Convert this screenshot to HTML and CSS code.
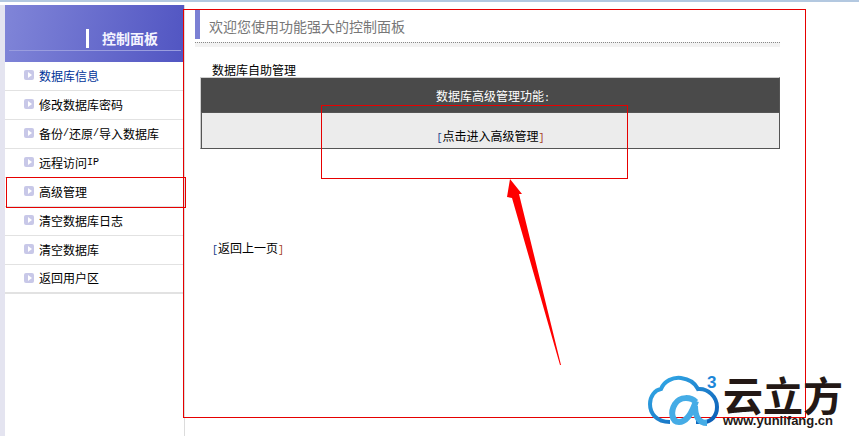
FILE: index.html
```html
<!DOCTYPE html>
<html lang="zh-CN">
<head>
    <meta charset="UTF-8">
    <title>控制面板</title>
    <link rel="stylesheet" href="styles.css">
</head>
<body>
    <div class="top_line"></div>
    <div class="page">
        <div class="side">
            <div class="side_head">
                <div class="side_title"><span>控制面板</span></div>
            </div>
            <p class="side_item active"><i class="dot"></i>数据库信息</p>
            <p class="side_item"><i class="dot"></i>修改数据库密码</p>
            <p class="side_item"><i class="dot"></i>备份<span class="mono">/</span>还原<span class="mono">/</span>导入数据库</p>
            <p class="side_item"><i class="dot"></i>远程访问<span class="mono">IP</span></p>
            <p class="side_item"><i class="dot"></i>高级管理</p>
            <p class="side_item"><i class="dot"></i>清空数据库日志</p>
            <p class="side_item"><i class="dot"></i>清空数据库</p>
            <p class="side_item last"><i class="dot"></i>返回用户区</p>
        </div>
        <div class="main">
            <h1 class="welcome">欢迎您使用功能强大的控制面板</h1>
            <div class="dots"></div>
            <p class="caption">数据库自助管理</p>
            <div class="panel">
                <div class="panel_head">数据库高级管理功能<span class="mono">:</span></div>
                <div class="panel_row"><span class="mono left">[</span>点击进入高级管理<span class="mono right">]</span></div>
            </div>
            <p class="back"><span class="mono left">[</span>返回上一页<span class="mono right">]</span></p>
        </div>
    </div>

    <!-- annotations drawn over the screenshot -->
    <div class="mark mark_big"></div>
    <div class="mark mark_item"></div>
    <div class="mark mark_link"></div>
    <svg class="arrow" width="70" height="190" viewBox="0 0 70 190">
        <path d="M10 0 L22 15 L19 15 L61 186 L60 186 L12 19 L7 18 Z" fill="#ff0000"/>
    </svg>

    <div class="logo">
        <svg class="cloud" width="78" height="54" viewBox="0 0 78 54">
            <defs>
                <linearGradient id="cloudFill" x1="0" y1="0" x2="1" y2="1">
                    <stop offset="0" stop-color="#35aeea"/>
                    <stop offset="1" stop-color="#0b5cb5"/>
                </linearGradient>
            </defs>
            <path d="M22 49 C8 49 2 40 2 31 C2 23 7 17 13 16 C16 8 25 4 33 5 C41 6 47 10 50 16 C60 15 69 24 69 34 C69 43 63 49 56 49 L48 49"
                fill="none" stroke="url(#cloudFill)" stroke-width="4"/>
            <path d="M48 29 C43 24 32 23 27 31 C22 39 24 49 31 49 C39 49 44 40 48 28 M47 33 C47 43 51 50 59 50"
                fill="none" stroke="#45ace6" stroke-width="6"/>
        </svg>
        <span class="cube">3</span>
        <div class="logo_text">
            <div class="logo_name">云立方</div>
            <div class="logo_url">www.yunlifang.cn</div>
        </div>
    </div>
</body>
</html>
```

FILE: styles.css
```css
html, body {
    margin: 0;
    height: 436px;
    overflow: hidden;
    background: #fff;
    font-family: "Noto Sans CJK SC", "Liberation Sans", sans-serif;
    font-size: 12px;
    color: #000;
}
body {
    position: relative;
}
.top_line {
    height: 2px;
    margin-bottom: 2px;
    background: #b3c8e0;
}
.page {
    display: flex;
    height: 432px;
    border-top: 1px solid transparent;
    box-sizing: border-box;
}
.side {
    width: 180px;
    margin-left: 5px;
    box-sizing: border-box;
    border-right: 1px solid #dcdcdc;
    box-shadow: -5px 0 0 #e4e4f0;
}
.side_head {
    height: 57px;
    padding: 0 3px 0 4px;
    box-sizing: border-box;
    background: linear-gradient(100deg, #8085d8, #5155c2);
}
.side_title {
    height: 46px;
    padding: 0 0 2px 77px;
    box-sizing: border-box;
    display: flex;
    align-items: flex-end;
    border-bottom: 1px solid #9a9dde;
}
.side_title span {
    border-left: 3px solid #fff;
    padding-left: 13px;
    height: 19px;
    line-height: 19px;
    color: #f4f4ff;
    font-size: 14px;
    font-weight: 700;
}
.side_item {
    display: flex;
    align-items: center;
    height: 29px;
    margin: 0;
    padding: 0 0 2px 19px;
    box-sizing: border-box;
    border-bottom: 1px solid #e2e2e2;
}
.side_item.active {
    color: #003399;
}
.side_item.last {
    border-bottom-width: 2px;
}
.mono {
    font-family: "Liberation Mono", monospace;
    font-size: 10px;
}
.left {
    color: #1c3f8a;
}
.right {
    color: #a5401c;
}
.dot {
    position: relative;
    width: 10px;
    height: 10px;
    margin-right: 5px;
    border-radius: 2px;
    background: #c8c8e8;
}
.dot::after {
    content: "";
    position: absolute;
    left: 4px;
    top: 2px;
    border-left: 4px solid #fff;
    border-top: 3px solid transparent;
    border-bottom: 3px solid transparent;
}
.main {
    width: 595px;
    padding: 5px 0 0 10px;
    box-sizing: border-box;
}
.welcome {
    margin: 0;
    height: 29px;
    padding-left: 9px;
    border-left: 5px solid #7b80d4;
    font-size: 14px;
    font-weight: 400;
    line-height: 32px;
    color: #777;
}
.dots {
    height: 4px;
    margin-top: 3px;
    border-top: 1px dotted #888;
    background: #f2f2f2;
}
.caption {
    margin: 15px 0 0 17px;
    height: 15px;
    line-height: 15px;
}
.panel {
    margin: 0 0 0 5px;
    width: 580px;
    border: 1px solid #cfcfcf;
    border-right: 1px solid #555;
    border-bottom: 1px solid #555;
    box-sizing: border-box;
}
.panel_head {
    height: 34px;
    padding-left: 6px;
    box-sizing: border-box;
    line-height: 35px;
    text-align: center;
    background: #4a4a4a;
    color: #fff;
}
.panel_row {
    height: 36px;
    padding-top: 13px;
    box-sizing: border-box;
    line-height: 20px;
    text-align: center;
    background: #ececec;
    border-top: 1px solid #555;
    border-left: 1px solid #555;
}
.back {
    margin: 90px 0 0 17px;
}
.mark {
    position: absolute;
    border: 1px solid #e60000;
    box-sizing: border-box;
}
.mark_big {
    left: 183px;
    top: 9px;
    width: 623px;
    height: 409px;
}
.mark_item {
    left: 6px;
    top: 177px;
    width: 180px;
    height: 31px;
}
.mark_link {
    left: 321px;
    top: 105px;
    width: 307px;
    height: 74px;
}
.arrow {
    position: absolute;
    left: 500px;
    top: 179px;
}
.logo {
    position: absolute;
    left: 648px;
    top: 373px;
    width: 205px;
    display: flex;
}
.cloud {
    margin-right: -1px;
}
.cube {
    position: absolute;
    left: 59px;
    top: 2px;
    font-family: "Liberation Sans", sans-serif;
    font-size: 17px;
    line-height: 15px;
    font-weight: 700;
    color: #1c86d8;
}
.logo_text {
    margin-left: -2px;
    color: #231815;
    font-weight: 700;
}
.logo_name {
    font-size: 40px;
    line-height: 42px;
    white-space: nowrap;
}
.logo_url {
    font-family: "Liberation Sans", sans-serif;
    font-size: 13px;
    line-height: 12px;
    white-space: nowrap;
}
```
